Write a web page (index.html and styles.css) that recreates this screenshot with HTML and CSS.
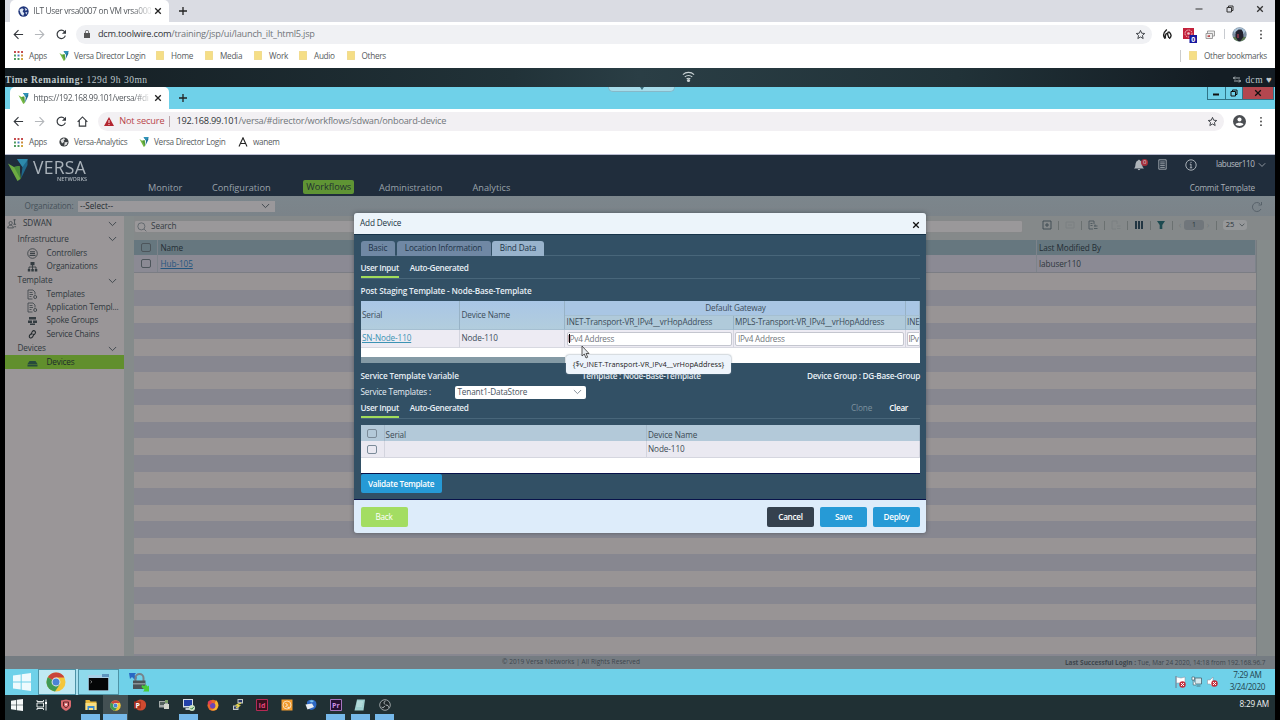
FILE: index.html
```html
<!DOCTYPE html>
<html lang="en">
<head>
<meta charset="utf-8">
<title>Versa Director</title>
<link rel="stylesheet" href="styles.css">
</head>
<body>
<svg class="defs" aria-hidden="true">
  <defs>
    <symbol id="back" viewBox="0 0 12 12"><path d="M11 6H1.500M6 1.300 1.300 6 6 10.700" fill="none" stroke="currentColor" stroke-width="1.200"/></symbol>
    <symbol id="fwd" viewBox="0 0 12 12"><path d="M1 6H10.500M6 1.300 10.700 6 6 10.700" fill="none" stroke="currentColor" stroke-width="1.200"/></symbol>
    <symbol id="reload" viewBox="0 0 12 12"><path d="M10.200 7.300A4.600 4.600 0 1 1 9.400 3" fill="none" stroke="currentColor" stroke-width="1.300"/><path d="M10.900.800v4.400H6.500z" fill="currentColor"/></symbol>
    <symbol id="home" viewBox="0 0 12 12"><path d="M.7 6.300 6 1l5.300 5.300M2.500 5v6h7V5" fill="none" stroke="currentColor" stroke-width="1.200"/></symbol>
    <symbol id="star" viewBox="0 0 12 12"><path d="m6 1.500 1.300 3.100 3.300.3-2.500 2.200.8 3.300L6 8.700l-2.900 1.700.8-3.300L1.400 4.900l3.300-.3z" fill="none" stroke="currentColor" stroke-width="1"/></symbol>
    <symbol id="dots" viewBox="0 0 4 12"><circle cx="2" cy="2" r="1"/><circle cx="2" cy="6" r="1"/><circle cx="2" cy="10" r="1"/></symbol>
    <symbol id="apps" viewBox="0 0 10.200 10.200"><path fill="#c4484a" d="M0 0h2.200v2.200H0zM4 0h2.200v2.200H4zM8 0h2.200v2.200H8z"/><path fill="#4c9a5d" d="M0 4h2.200v2.200H0z"/><path fill="#4a7fc0" d="M4 4h2.200v2.200H4z"/><path fill="#c98a3c" d="M8 4h2.200v2.200H8z"/><path fill="#4c9a5d" d="M0 8h2.200v2.200H0zM4 8h2.200v2.200H4z"/><path fill="#d0a43c" d="M8 8h2.200v2.200H8z"/></symbol>
    <symbol id="versa" viewBox="0 0 20 22"><path fill="#76b843" d="M0 4.500 6 8l5.500-1L12.500 20l-3 2z"/><path fill="#4f9a3a" d="m6 8 5.500-1L12.500 20z"/><path fill="#1f6f94" d="M9 0h10.500v6L13 19.500 14.500 8z"/><path fill="#2f93b8" d="M9 0h10.500v1L14.500 8z"/></symbol>
    <symbol id="x" viewBox="0 0 8 8"><path d="m1.200 1.200 5.600 5.600m0-5.600L1.200 6.800" fill="none" stroke="currentColor" stroke-width="1.300"/></symbol>
    <symbol id="plus" viewBox="0 0 8 8"><path d="M4 0v8M0 4h8" fill="none" stroke="currentColor" stroke-width="1.300"/></symbol>
    <symbol id="chev" viewBox="0 0 10 6"><path d="m1 .8 4 4 4-4" fill="none" stroke="currentColor" stroke-width="1"/></symbol>
    <symbol id="restore" viewBox="0 0 8 8"><path d="M1 2.500h4.500V7H1zM2.500 2.500V1H7v4.500H5.500" fill="none" stroke="currentColor" stroke-width="1"/></symbol>
    <symbol id="folder" viewBox="0 0 8 9"><path fill="#f5de86" stroke="#e6ca68" stroke-width=".5" d="M.3.3h7.400v8.400H.3z"/></symbol>
    <symbol id="globe" viewBox="0 0 10 10"><circle cx="5" cy="5" r="4.600" fill="#3c4043"/><path fill="#fff" d="M1.500 3.300 5 1l1 1.500-1.500 1.300.8 1L3 6.500zM5.500 5.200 8.800 5 7.500 8 5 8.800l.6-1.800z" opacity=".85"/></symbol>
    <symbol id="tpl" viewBox="0 0 11 11"><path d="M5.500 10H1V1h5l2 2v2.500M2.500 3.500h3M2.500 5.500h3.500M2.500 7.500h2" fill="none" stroke="currentColor" stroke-width=".8"/><circle cx="8.200" cy="8" r="1.500" fill="none" stroke="currentColor" stroke-width=".9"/></symbol>
    <symbol id="chrome" viewBox="0 0 20 20"><circle cx="10" cy="10" r="9.500" fill="#f3c63b"/><path fill="#c9453c" d="M10 10 1.800 5.200A9.500 9.500 0 0 1 18.400 5.500H10z"/><path fill="#3f9a55" d="M1.800 5.200A9.500 9.500 0 0 0 9 19.500L13.900 12.300 10 10z"/><circle cx="10" cy="10" r="4.400" fill="#eef3ee"/><circle cx="10" cy="10" r="3.500" fill="#4a83d6"/></symbol>
    <symbol id="win" viewBox="0 0 18 18"><path fill="currentColor" d="M0 2.500 7.700 1.400v7.100H0zM8.700 1.200 18 0v8.500H8.700zM0 9.500h7.700v7.100L0 15.500zM8.700 9.500H18V18l-9.300-1.200z"/></symbol>
  </defs>
</svg>

<div class="screen">
  <!-- outer browser -->
  <div class="tabstrip outer">
    <div class="tab">
      <svg class="fav" viewBox="0 0 10 10"><circle cx="5" cy="5" r="4.700" fill="#1f357a"/><path fill="#dfe8f5" d="M1.200 3.500 3.700 2l1.500 1-1 2 1.500 1.500-1 2.500-2-1.500zM6 1.500l2.500 1.700L7 4.500zM6.500 6l2-.5-.8 2.300z"/></svg>
      <span class="tabtitle ls-a">ILT User vrsa0007 on VM vrsa000</span>
      <svg class="x7"><use href="#x"/></svg>
    </div>
    <svg class="newtab"><use href="#plus"/></svg>
    <div class="winbtns"><svg viewBox="0 0 8 8"><path d="M0.500 4h7" stroke="#333"/></svg><svg><use href="#restore"/></svg><svg><use href="#x"/></svg></div>
  </div>
  <div class="addr a1">
    <svg class="ic"><use href="#back"/></svg><svg class="ic faint"><use href="#fwd"/></svg><svg class="ic"><use href="#reload"/></svg>
    <div class="pill">
      <svg class="lock" viewBox="0 0 6 8"><path fill="#555" d="M0 3h6v5H0z"/><path d="M1.400 3V1.800a1.600 1.600 0 0 1 3.200 0V3" fill="none" stroke="#555" stroke-width=".8"/></svg>
      <span class="url u1"><b>dcm.toolwire.com</b>/training/jsp/ui/launch_ilt_html5.jsp</span>
      <svg class="star"><use href="#star"/></svg>
    </div>
    <div class="ext">
      <svg class="e1" viewBox="0 0 10 10"><path d="M4.800.5C1.500 3.500.3 6.500 3.200 9.700M3.600 9.500C2.500 6.500 4 5.500 4.700 4M6.500 2.500C9.800 5 9.800 7.500 7.200 9.700M6.300 3C4.500 5.500 6.500 6.500 6.800 9" fill="none" stroke="#222" stroke-width="1.400"/></svg>
      <svg class="e2" viewBox="0 0 14 15"><path fill="#c3213b" d="M0 0h11v11H0z"/><circle cx="5.500" cy="5.500" r="3.500" fill="none" stroke="#f1c9cf" stroke-dasharray="1.500 .8"/><circle cx="5.500" cy="5.500" r="1.300" fill="#f1c9cf"/><path fill="#17179e" d="M6.500 7H14v8H6.500z"/><text x="8.300" y="13.700" fill="#fff" font-size="7" font-weight="700" font-family="Open Sans">0</text></svg>
      <svg class="e3" viewBox="0 0 10 9"><path d="M1 3.500h6.500v5H1zM2.500 3.500v-2.500h7V6H7.500" fill="#eee" stroke="#888" stroke-width=".8"/><path fill="#b55" d="M2.500 5.500 5 5v2H2.500z"/></svg>
      <i class="sep"></i>
      <svg class="e4" viewBox="0 0 15 15"><circle cx="7.500" cy="7.500" r="7.200" fill="#7b8da0"/><path fill="#a9c1d6" d="M1.500 4a7.200 7.200 0 0 1 12 0l-2 3H3z"/><path fill="#5d7a52" d="M1 10h13a7 7 0 0 1-13 0z"/><path fill="#23232f" d="M3.500 5l3-2.500h3L11 5l.5 5-3 4H6L3.500 10z"/><path fill="#773244" d="M5 7h2v4H5z"/></svg>
      <svg class="e5"><use href="#dots"/></svg>
    </div>
  </div>
  <div class="bookmarks b1">
    <span class="bm"><svg class="i9"><use href="#apps"/></svg>Apps</span>
    <span class="bm"><svg class="i10"><use href="#versa"/></svg>Versa Director Login</span>
    <span class="bm"><svg class="i8"><use href="#folder"/></svg>Home</span>
    <span class="bm"><svg class="i8"><use href="#folder"/></svg>Media</span>
    <span class="bm"><svg class="i8"><use href="#folder"/></svg>Work</span>
    <span class="bm"><svg class="i8"><use href="#folder"/></svg>Audio</span>
    <span class="bm"><svg class="i8"><use href="#folder"/></svg>Others</span>
    <span class="bm other"><svg class="i8"><use href="#folder"/></svg>Other bookmarks</span>
  </div>

  <!-- remote session bar -->
  <div class="session">
    <span class="remain"><b>Time Remaining:</b> 129d 9h 30mn</span>
    <svg class="wifi" viewBox="0 0 14 13"><path d="M1 4.500a8.500 8.500 0 0 1 12 0M3 7a5.700 5.700 0 0 1 8 0M5 9.200a2.800 2.800 0 0 1 4 0" fill="none" stroke="#c9d2d4" stroke-width="1.200"/><circle cx="7" cy="10.800" r="1.700" fill="#c9d2d4"/></svg>
    <span class="dcm"><svg viewBox="0 0 8 7"><path d="M0 2h7M2 .5.5 2 2 3.500M1 5h7M6 3.500 7.500 5 6 6.500" fill="none" stroke="#c4cdd0" stroke-width=".8"/></svg>dcm ♥</span>
  </div>

  <!-- inner browser -->
  <div class="tabstrip inner">
    <div class="tab">
      <svg class="fav"><use href="#versa"/></svg>
      <span class="tabtitle ls-b">https://192.168.99.101/versa/#di</span>
      <svg class="x7"><use href="#x"/></svg>
    </div>
    <svg class="newtab"><use href="#plus"/></svg>
    <div class="handle"><svg viewBox="0 0 4 3"><path d="M0 0h4L2 3z" fill="#3b6c7b"/></svg></div>
    <div class="rdp"><span><svg viewBox="0 0 8 8"><path d="M1 5.500h6" stroke="#111" stroke-width="2"/></svg></span><span><svg class="bold"><use href="#restore"/></svg></span><span class="red"><svg class="bold"><use href="#x"/></svg></span></div>
  </div>
  <div class="addr a2">
    <svg class="ic"><use href="#back"/></svg><svg class="ic faint"><use href="#fwd"/></svg><svg class="ic"><use href="#reload"/></svg><svg class="ic"><use href="#home"/></svg>
    <div class="pill">
      <svg class="warn" viewBox="0 0 10 9"><path fill="#b32530" d="M5 0 10 9H0z"/><path d="M5 3v3M5 7v1" stroke="#fff" stroke-width=".9"/></svg>
      <span class="notsec">Not secure</span><i class="sep2"></i>
      <span class="url u2"><b>192.168.99.101</b>/versa/#director/workflows/sdwan/onboard-device</span>
      <svg class="star"><use href="#star"/></svg>
    </div>
    <svg class="user" viewBox="0 0 12 12"><circle cx="6" cy="6" r="6" fill="#4b4e52"/><circle cx="6" cy="4.200" r="1.900" fill="#fff"/><path fill="#fff" d="M2.300 8.500C3.500 6.600 8.500 6.600 9.700 8.500 8.500 10.600 3.500 10.600 2.300 8.500z"/></svg>
    <svg class="e5"><use href="#dots"/></svg>
  </div>
  <div class="bookmarks b2">
    <span class="bm"><svg class="i9"><use href="#apps"/></svg>Apps</span>
    <span class="bm"><svg class="i10"><use href="#globe"/></svg>Versa-Analytics</span>
    <span class="bm"><svg class="i10"><use href="#versa"/></svg>Versa Director Login</span>
    <span class="bm"><svg class="i10" viewBox="0 0 10 10"><path d="M1 9.500 5 .8l4 8.700M3 6.500h4.500" fill="none" stroke="#222" stroke-width="1.100"/></svg>wanem</span>
  </div>

  <!-- application -->
  <header class="apphead">
    <div class="brand">
      <svg class="logo"><use href="#versa"/></svg>
      <div class="word"><strong>VERSA</strong><small>NETWORKS</small></div>
    </div>
    <nav>
      <span>Monitor</span><span>Configuration</span><span class="on">Workflows</span><span>Administration</span><span>Analytics</span>
    </nav>
    <div class="account">
      <div class="acc1">
        <span class="bell"><svg viewBox="0 0 12 12"><path fill="#aeb4ba" d="M1 9.500C3 8 2 5 3 3.500 3.500 2 4.500 1.800 5 1.500 5 .5 7 .5 7 1.500 9 2 9.200 4 9.300 6c0 1.500.7 2.500 1.700 3.500zM4.800 10h2.400c0 1.500-2.400 1.500-2.400 0z"/></svg><em>0</em></span>
        <svg class="list" viewBox="0 0 9 11"><path d="M.8.800h7.400v9.400H.8zM2.200 3h4.600M2.200 4.800h4.600M2.200 6.600h4.600M2.200 8.400h4.600" fill="none" stroke="#a5abb2" stroke-width=".9"/></svg>
        <svg class="info" viewBox="0 0 12 12"><circle cx="6" cy="6" r="5.200" fill="none" stroke="#b6bcc2" stroke-width=".9"/><path d="M6 5v3.800M4.800 5.200H6M4.800 8.800h2.400M6 2.800V4" fill="none" stroke="#b6bcc2" stroke-width=".9"/></svg>
        <span class="who">labuser110</span><svg class="chv"><use href="#chev"/></svg>
      </div>
      <span class="commit">Commit Template</span>
    </div>
  </header>
  <div class="orgbar">
    <span class="orglabel">Organization:</span>
    <div class="orgsel"><span>--Select--</span><svg class="chv"><use href="#chev"/></svg></div>
    <svg class="refresh" viewBox="0 0 12 12"><path d="M10 8A4.500 4.500 0 1 1 9 2.700M10.500 1v3H7.500" fill="none" stroke="#545d66" stroke-width=".9"/></svg>
  </div>
  <div class="main">
    <aside>
      <div class="grp r15 top"><svg viewBox="0 0 11 11"><circle cx="4" cy="4.500" r="1.800" fill="none" stroke="#3f474c" stroke-width=".8"/><path d="M.8 9.800c.2-4 6-4 6.200 0zM7 1l2.500-.2M8.300.8v5M7 5.800h3M8 8.500h2" fill="none" stroke="#3f474c" stroke-width=".9"/></svg><span>SDWAN</span><svg class="chv"><use href="#chev"/></svg></div>
      <div class="grp r16"><span>Infrastructure</span><svg class="chv"><use href="#chev"/></svg></div>
      <div class="leaf r12"><svg viewBox="0 0 11 11"><circle cx="5.500" cy="5.500" r="4.800" fill="none" stroke="#333b40" stroke-width=".8"/><path d="M3 3.800h5M3 5.600h5M2.500 7.400h6" stroke="#333b40" stroke-width="1"/></svg><span>Controllers</span></div>
      <div class="leaf r14"><svg viewBox="0 0 11 11"><path fill="#333b40" d="M3.500 1h4v3.200h-4zM.8 8h2.500v2.500H.8zM4.300 8h2.500v2.500H4.300zM7.800 8h2.500v2.500H7.800z"/><path d="M2 8V6h7v2M5.500 4v4" fill="none" stroke="#333b40" stroke-width=".9"/></svg><span>Organizations</span></div>
      <div class="grp r15"><span>Template</span><svg class="chv"><use href="#chev"/></svg></div>
      <div class="leaf r12"><svg><use href="#tpl"/></svg><span>Templates</span></div>
      <div class="leaf r14"><svg><use href="#tpl"/></svg><span>Application Templ...</span></div>
      <div class="leaf r13"><svg viewBox="0 0 11 11"><path fill="#333b40" d="M2 2h7v2.500H2zM1 5.500h4V8H1zM6 5.500h4V8H6zM3 8.500h5v1.500H3z"/></svg><span>Spoke Groups</span></div>
      <div class="leaf r15"><svg viewBox="0 0 11 11"><path d="M5 5.500C3.500 4 6 .8 7.800 2s-.3 4.300-1.800 4M6 5c1.500 1.500-1.500 5-3.200 3.600S4 4 5.500 5" fill="none" stroke="#23292d" stroke-width="1.100"/></svg><span>Service Chains</span></div>
      <div class="grp r13"><span>Devices</span><svg class="chv"><use href="#chev"/></svg></div>
      <div class="leaf r14 sel"><svg viewBox="0 0 11 11"><path fill="#274a3c" d="M2.500 4h6l2 3H.5zM.5 7.500h10v2H.5z"/></svg><span>Devices</span></div>
    </aside>
    <section class="content">
      <div class="toolbar">
        <div class="search"><svg viewBox="0 0 11 11"><circle cx="4.800" cy="4.800" r="3.900" fill="none" stroke="#525a60" stroke-width=".8"/><path d="m7.800 7.800 2.500 2.500" stroke="#525a60" stroke-width=".8"/></svg>Search</div>
        <div class="tools">
          <svg viewBox="0 0 10 10"><path d="M1 1h8v8H1zM5 3v4M3 5h4" fill="none" stroke="#3c4a50" stroke-width=".9"/></svg><i></i>
          <svg viewBox="0 0 10 10" class="dim"><path d="M1 2h8v6H1zM3 5h4" fill="none" stroke="#60686c" stroke-width=".8"/></svg><i></i>
          <svg viewBox="0 0 10 10"><path d="M5 9H1V1h5v3M2.500 3.500h2M2.500 5.500h2M6 6h3.500M6 8.500h3.500M7 4.500v2" fill="none" stroke="#4c585e" stroke-width=".9"/></svg><i></i>
          <svg viewBox="0 0 10 10" class="dim"><path d="M5 9H1V1h5v3M6 6h3.500M6 8.500h3.500" fill="none" stroke="#60686c" stroke-width=".8"/></svg><i></i>
          <svg viewBox="0 0 10 10"><path d="M2 1v8M5 1v8M8 1v8" stroke="#1e333f" stroke-width="1.900"/></svg><i></i>
          <svg class="funnel" viewBox="0 0 10 10"><path fill="#1d4a50" d="M1 1h8L6.300 5v4H3.700V5z"/></svg><i></i>
          <span class="pager"><u>‹</u><b>1</b><u>›</u></span><i></i>
          <span class="size">25<svg><use href="#chev"/></svg></span>
        </div>
      </div>
      <div class="grid">
        <div class="ghead"><span class="ck"><i></i></span><span>Name</span><span>Last Modified By</span></div>
        <div class="grow"><span class="ck"><i></i></span><span><a>Hub-105</a></span><span>labuser110</span></div>
        <div class="stripes"></div>
      </div>
    </section>
  </div>
  <footer><span></span><span class="copy">© 2019 Versa Networks | All Rights Reserved</span><span class="login"><b>Last Successful Login :</b> Tue, Mar 24 2020, 14:18 from 192.168.96.7</span></footer>

  <!-- remote taskbar -->
  <div class="rtask">
    <div class="rt s"><svg><use href="#win"/></svg></div>
    <div class="rt c"><svg><use href="#chrome"/></svg></div>
    <div class="rt t"><svg viewBox="0 0 21 17"><path fill="#a8cfe6" d="M0 1h21v16H0z"/><path fill="#5d94bd" d="M14 0h7v3h-7z"/><path fill="#050607" d="M.8 4h19.400v12.300H.8z"/><path d="m2.500 6.500 1.500 1.300L2.500 9" fill="none" stroke="#aaa" stroke-width=".7"/></svg></div>
    <div class="rt l"><svg viewBox="0 0 20 20"><path fill="#2868c4" d="M0 1h7L5.500 3 8 6 6 8 3 5 1 7z"/><path d="M6.500 9V6a4 4 0 0 1 8 0v3" fill="none" stroke="#77828a" stroke-width="2"/><path fill="#4b5359" d="M4 8.500h12.500V17H4z"/><path fill="#8b9499" d="M4 11h12.500v1.500H4z"/><path fill="#49cc3a" d="m13 13 2 1 2-1.500 1.500 2 1.500-1v6h-6l1.500-1.800-3-2.700z"/></svg></div>
    <div class="tray">
      <svg viewBox="0 0 11 12"><path d="M1 0v12" stroke="#778"/><path fill="#fff" stroke="#889" stroke-width=".5" d="M1.500 1 6 2l4-1v6H1.500z"/><circle cx="7.500" cy="8.500" r="3.200" fill="#c22e3d"/><path d="m6 7 3 3m0-3-3 3" stroke="#fff"/></svg>
      <svg viewBox="0 0 11 12"><path fill="#d5e9ef" stroke="#47636f" stroke-width=".8" d="M4 2h6.500v6H4zM5.500 10h4"/><path fill="#fff" stroke="#47636f" stroke-width=".7" d="M1 1h2.500v3H1zM2.200 4v5H5"/></svg>
      <svg viewBox="0 0 11 12"><path fill="#fff" stroke="#889" stroke-width=".5" d="M.5 4H3l3-3v10L3 8H.5z"/><circle cx="7.500" cy="7.500" r="3.200" fill="#c22e3d"/><path d="m6 6 3 3m0-3-3 3" stroke="#fff"/></svg>
      <div class="clock"><span>7:29 AM</span><span>3/24/2020</span></div>
    </div>
  </div>

  <!-- host taskbar -->
  <div class="htask">
    <div><svg class="w"><use href="#win"/></svg></div>
    <div><svg viewBox="0 0 12 12"><path d="M1 1v1.500h6.500V1M1 11V9.500h6.500V11M1 4h6.500v4H1zM10 .5v11" fill="none" stroke="#e4e8e8" stroke-width="1"/><path fill="#fff" d="M9 3h2v2H9z"/></svg></div>
    <div><svg viewBox="0 0 12 12"><path fill="#d96a6e" d="M1 1.500 6 .5l5 1v5C11 9.500 8 11 6 12 4 11 1 9.500 1 6.500z"/><path d="M3.500 3h5v4L6 9 3.500 7z" fill="none" stroke="#63262b"/><circle cx="6" cy="5.500" r="1" fill="#fff"/></svg></div>
    <div class="run f"><svg viewBox="0 0 12 12"><path fill="#e9b93d" d="M.5 1h4l1 1.500h6V11H.5z"/><path fill="#f9df83" d="M.5 4h11v7H.5z"/><path fill="#3d8bd0" d="M2.500 7h7v4H8V9H4v2H2.500z"/></svg></div>
    <div class="run on"><svg class="ch"><use href="#chrome"/></svg></div>
    <div><svg viewBox="0 0 12 12"><circle cx="6.500" cy="6" r="5.600" fill="#cf4a30"/><path fill="#a83320" d="M0 2.500h7v7H0z"/><text x="1.600" y="8.600" fill="#fff" font-size="7" font-weight="700" font-family="Open Sans">P</text></svg></div>
    <div><svg viewBox="0 0 12 12"><path fill="#a4aaa9" d="M1 2h9v6.500H1z"/><path fill="#52605c" d="M2 3h5v3H2z"/><path fill="#d2d6cc" d="M6 5h5v5H6z"/><path fill="#7a9f68" d="M7 1h3v3H7z"/></svg></div>
    <div class="run m"><svg viewBox="0 0 12 12"><path fill="#d6dde6" d="M0 0h10v8.500H0z"/><path fill="#2340a8" d="M1 1h8v6H1z"/><path fill="#c3ccd4" d="M2.500 9h5v2h-5z"/><circle cx="9" cy="9" r="3" fill="#cfe5c6"/><path d="m7.500 9 1.200 1.200L10.700 8" fill="none" stroke="#2e7d3c"/></svg></div>
    <div><svg viewBox="0 0 12 12"><circle cx="6" cy="6.300" r="5.500" fill="#e8662b"/><path fill="#f7b731" d="M9 1c2 2 3 5 1.500 8S5 12 3 10.500C8 11 9 8 7.500 5.500z"/><circle cx="5.700" cy="6.700" r="2.700" fill="#6a45b8"/><path fill="#e23d58" d="M.7 4C1 2 3 1 4 1.500L5 4 2.500 6z"/></svg></div>
    <div><svg viewBox="0 0 12 12"><path fill="#c4c9c6" d="M5.500 0h5.500v4.500H5.500zM1 6.500h5.500V11H1z"/><path fill="#28366a" d="M6.500 1H10v2.300H6.500zM2 7.500h3.500v2.300H2z"/><path d="M9 4 4.500 6l3 .7L4 9" fill="none" stroke="#ecd84b" stroke-width="1.200"/></svg></div>
    <div><svg viewBox="0 0 12 12"><path fill="#39101c" stroke="#b62a55" d="M.5.500h11v11H.5z"/><text x="2.600" y="8.700" fill="#e0447a" font-size="7" font-weight="700" font-family="Open Sans">Id</text></svg></div>
    <div><svg viewBox="0 0 12 12"><path fill="#f19a2c" d="M.5.500h11v11H.5z"/><circle cx="6" cy="6" r="4" fill="none" stroke="#fbe2bd" stroke-width=".9"/><path d="m4.500 4 2 2-2 2M6.500 8.300h2" fill="none" stroke="#fff" stroke-width=".9"/></svg></div>
    <div><svg viewBox="0 0 12 12"><path fill="#2d68c4" d="M2 3c1-2.500 7-3.500 9 0 1.500 4-1 8-5 8L2 9z"/><path fill="#e9edf3" d="M.5 5.500 7 4.500 9 8l-6.500 2.500z"/><path fill="#7cc4f1" d="M4 2c1.500-1 4-1 5 0L7 3.500z"/></svg></div>
    <div class="run p"><svg viewBox="0 0 12 12"><path fill="#251033" stroke="#a775bf" d="M.5.500h11v11H.5z"/><text x="2" y="8.700" fill="#c992e6" font-size="7" font-weight="700" font-family="Open Sans">Pr</text></svg></div>
    <div class="run p"><svg viewBox="0 0 12 12"><path fill="#9fd0d0" d="M3 .5h8L9.500 11.500H.5z"/><path d="M3 3h6M3 5h5.500M2.500 7h5.500" stroke="#d9efee" stroke-width=".7"/></svg></div>
    <div class="run p"><svg viewBox="0 0 12 12"><circle cx="6" cy="6" r="5.300" fill="#20272a" stroke="#b9bec0" stroke-width=".8"/><path d="M6 5.500C4.500 4 5 2.500 6.500 2M6.700 6.200c2-.5 3 .8 2.800 2.300M5.500 7C5 9 3.500 9 2.500 8" fill="none" stroke="#b9bec0" stroke-width="1"/></svg></div>
    <span class="hclock">8:29 AM</span>
  </div>
</div>

<!-- Add Device dialog -->
<div class="modal">
  <div class="mhead"><span>Add Device</span><svg class="x8"><use href="#x"/></svg></div>
  <div class="mbody">
    <div class="mtabs"><span>Basic</span><span>Location Information</span><span class="act">Bind Data</span></div>
    <div class="subtabs st1"><span class="cur">User Input</span><span>Auto-Generated</span></div>
    <div class="mtitle">Post Staging Template - Node-Base-Template</div>
    <div class="vars">
      <div class="vh tall">Serial</div><div class="vh tall">Device Name</div><div class="vh dg">Default Gateway</div><div class="vh dg2"></div>
      <div class="vh">INET-Transport-VR_IPv4__vrHopAddress</div><div class="vh">MPLS-Transport-VR_IPv4__vrHopAddress</div><div class="vh">INE</div>
      <div class="vd"><a>SN-Node-110</a></div><div class="vd">Node-110</div><div class="vd in"><span class="focus">IPv4 Address</span></div><div class="vd in"><span>IPv4 Address</span></div><div class="vd in last"><span>IPv</span></div>
      <div class="hscroll"></div>
    </div>
    <div class="info1"><b>Service Template Variable</b><span>Template : Node-Base-Template</span><span class="r">Device Group : DG-Base-Group</span></div>
    <div class="info2"><span>Service Templates :</span><div class="sel2">Tenant1-DataStore<svg class="chv"><use href="#chev"/></svg></div></div>
    <div class="subtabs st2"><span class="cur">User Input</span><span>Auto-Generated</span><span class="clone">Clone</span><span class="clear">Clear</span></div>
    <div class="svc">
      <div class="sh"><span class="ck"><i></i></span><span>Serial</span><span>Device Name</span></div>
      <div class="sr"><span class="ck"><i></i></span><span></span><span>Node-110</span></div>
    </div>
    <button class="validate">Validate Template</button>
  </div>
  <div class="mfoot"><button class="green">Back</button><button class="dark">Cancel</button><button>Save</button><button>Deploy</button></div>
</div>
<div class="tip">{$v_INET-Transport-VR_IPv4__vrHopAddress}</div>
<svg class="cursor" viewBox="0 0 9 14"><path fill="#e8ecf0" stroke="#333" stroke-width=".8" d="M1 1v10l2.300-2L5 13l1.700-.8L5 8.500h3z"/></svg>
</body>
</html>
```
FILE: styles.css
```css
* { box-sizing: border-box; }
body { margin: 0; width: 1280px; height: 720px; overflow: hidden; background: #000; font: 8.200px/1 "Open Sans", "Noto Sans", sans-serif; color: #2d373d; }
svg { display: block; flex: none; }
.defs { position: absolute; width: 0; height: 0; }
.screen { width: 1270px; height: 720px; margin-left: 5px; overflow: hidden; white-space: nowrap; }
i { font-style: normal; }
button { border: 0; font: inherit; letter-spacing: inherit; }

/* browser chrome */
.tabstrip { display: flex; height: 22px; }
.outer { background: #dadce3; }
.inner { background: #6fd1e9; }
.tab { display: flex; align-items: center; width: 159px; margin-left: 5px; padding-left: 7.500px; background: #fff; border-radius: 5px 5px 0 0; }
.fav { width: 11px; height: 11px; margin-right: 5px; }
.tabtitle { width: 117px; overflow: hidden; font-size: 8.300px; line-height: 12px; color: #54585d; -webkit-mask-image: linear-gradient(90deg, #000 84%, rgba(0, 0, 0, .2) 98%); mask-image: linear-gradient(90deg, #000 84%, rgba(0, 0, 0, .2) 98%); }
.ls-a { letter-spacing: -.32px; }
.ls-b { letter-spacing: -.36px; }
.x7 { width: 8px; height: 8px; margin-left: 3px; color: #222; }
.newtab { width: 8px; height: 8px; margin: 7px 0 0 10px; color: #222; }
.winbtns { display: flex; gap: 22.500px; margin: 5px 11px 0 auto; color: #333; }
.winbtns svg { width: 8px; height: 8px; }
.handle { width: 67px; height: 5px; margin-left: 421px; background: #a6dcea; border: 1px solid #86b8c8; border-top: 0; border-radius: 0 0 5px 5px; }
.handle svg { width: 4px; height: 3px; margin: 0 auto; }
.rdp { display: flex; margin-left: auto; height: 13px; margin-right: 1px; border: 1px solid #2f7487; border-top: 0; }
.rdp span { display: flex; align-items: center; justify-content: center; width: 17.500px; border-right: 1px solid #2f7487; color: #111; }
.rdp svg { width: 8px; height: 8px; }
.rdp .red { width: 30px; background: #b3474f; border: 0; }
.bold { stroke: currentColor; stroke-width: .5; }
.addr { display: flex; align-items: center; height: 24px; padding-left: 8px; background: #fff; color: #34383d; }
.ic { width: 11px; height: 11px; margin-right: 10.300px; }
.faint { color: #b4b7bb; }
.pill { display: flex; align-items: center; height: 19px; padding-right: 6px; border-radius: 10px; background: #f0f1f4; }
.a1 .pill { width: 1076px; margin-left: -1px; margin-right: 10px; padding-left: 8px; }
.lock { width: 6px; height: 8px; margin-right: 8px; }
.url { font-size: 9.200px; line-height: 14px; color: #70757a; }
.url b { font-weight: 400; color: #303438; }
.u1 { letter-spacing: -.21px; }
.star { width: 11px; height: 11px; margin-left: auto; }
.ext { display: flex; align-items: center; }
.e1 { width: 10px; height: 10px; margin-right: 11px; }
.e2 { width: 14px; height: 15px; margin: 3px 8px 0 0; }
.e3 { width: 10px; height: 9px; margin-right: 9px; }
.sep { width: 1px; height: 10px; margin-right: 7px; background: #c8cbd0; }
.e4 { width: 15px; height: 15px; margin-right: 12px; }
.e5 { width: 4px; height: 11px; fill: #444; }
.a2 .pill { width: 1126px; margin: 0 9px 0 0; padding-left: 6px; background: #f2f0f3; }
.a2 .user { margin-right: 13px; margin-left: 0; }
.a2 .star { margin-right: 0; }
.warn { width: 10px; height: 9px; margin-right: 5px; }
.notsec { font-size: 9.200px; line-height: 14px; color: #b8444a; letter-spacing: -.13px; }
.sep2 { width: 1px; height: 11px; margin: 0 6px 0 5px; background: #b9a6ab; }
.u2 { letter-spacing: -.22px; }
.user { width: 13px; height: 13px; }
.bookmarks { display: grid; align-items: center; height: 22px; padding-left: 9px; background: #fff; padding-bottom: 3px; }
.b2 { border-bottom: 1px solid #b9bcd0; }
.bm { display: flex; align-items: center; font-size: 8.200px; letter-spacing: -.29px; line-height: 12px; color: #575b60; }
.bm svg { margin-right: 5px; }
.bm .i8 { margin-right: 7px; }
.bm:first-child svg { margin-right: 6px; }
.i9 { width: 9px; height: 9px; } .i10 { width: 10px; height: 10px; } .i8 { width: 8px; height: 9px; }
.b1 { grid-template-columns: 45px 97px 49px 49px 45px 47.500px 1fr 95px; }
.b2 { grid-template-columns: 45px 80px 99px 1fr; }
.b1 .other { border-left: 1px solid #ccc; padding-left: 8px; }

/* session bar */
.session { display: grid; grid-template-columns: 1fr 14px 1fr; align-items: center; height: 19px; background: linear-gradient(90deg, #141d22, #213238 40%, #2a3e45 50%, #213238 75%, #141d24 95%); color: #bec7ca; font: 9.500px/12px "Liberation Serif", serif; padding-top: 4px; }
.remain { letter-spacing: .52px; }
.session .wifi { width: 13px; height: 13px; margin: -7px 0 0 48.500px; }
.dcm { display: flex; justify-content: flex-end; align-items: center; gap: 4px; padding-right: 3px; letter-spacing: .45px; }
.dcm svg { width: 8px; height: 7px; }

/* application header */
.apphead { display: flex; height: 41px; background: #202d3c; color: #9aa2aa; }
.brand { display: flex; width: 137px; padding: 4px 0 0 3px; opacity: .9; }
.logo { width: 20px; height: 22px; margin-right: 5px; }
.word { width: 54px; display: flex; flex-direction: column; color: #b9c1c8; }
.word strong { height: 17px; font: 500 17.500px/17px "Open Sans", sans-serif; letter-spacing: .3px; }
.word small { font: 600 5.500px/6px "Open Sans", sans-serif; align-self: flex-end; }
nav { display: grid; grid-template-columns: 64px 91px 76px 93.500px 50px; align-items: center; height: 14px; margin-top: 25px; padding-left: 6px; font-size: 9.200px; }
nav .on { justify-self: start; margin-left: 0; padding: 2px 3.200px 3px; background: #5f9434; border-radius: 2px; color: #1f3030; }
.account { margin-left: auto; width: 146px; padding: 2px 0 0 0; }
.acc1 { display: flex; align-items: center; height: 15px; font-size: 8.200px; letter-spacing: -.4px; color: #b6bcc2; }
.bell { position: relative; margin-left: 4px; }
.bell svg { width: 12px; height: 12px; }
.bell em { position: absolute; left: 8px; top: 0; width: 7px; height: 7px; border-radius: 4px; background: #a52f3c; color: #ddd; font: 6px/7px "Open Sans", sans-serif; text-align: center; }
.list { width: 9px; height: 11px; margin-left: 13px; }
.info { width: 12px; height: 12px; margin-left: 18px; }
.who { margin-left: 19px; }
.chv { width: 9px; height: 6px; color: #3a4248; }
.who + .chv { margin-left: 3px; width: 8px; }
.commit { display: block; text-align: right; padding: 11.500px 20px 0 0; font-size: 8.200px; letter-spacing: -.2px; color: #a9b0b6; }
.orgbar { display: flex; align-items: center; height: 20px; padding-left: 19.500px; background: linear-gradient(#7c868c, #7b8389); }
.orglabel { width: 53.500px; color: #46525a; letter-spacing: -.18px; }
.orgsel { display: flex; align-items: center; justify-content: space-between; width: 197px; height: 11px; padding: 0 5px 0 2px; background: #9a989b; color: #252c31; }
.apphead .chv { color: #aab0b6; }
.refresh { width: 12px; height: 12px; margin: 1px 12px 0 auto; }

/* main area */
.main { display: flex; height: 440px; background: #858b8b; }
aside { width: 119px; background: #9a9698; color: #30383e; letter-spacing: -.12px; }
.grp { display: flex; align-items: center; padding: 0 7px 0 12.500px; }
.grp .chv { margin-left: auto; }
.top { padding-left: 2px; }
.top > svg:first-child { width: 10px; height: 10px; margin-right: 6px; }
.leaf { display: flex; align-items: center; padding-left: 22px; letter-spacing: -.16px; }
.leaf svg { width: 11px; height: 11px; margin-right: 8.500px; color: #3b4347; }
.r12 { height: 12px; } .r13 { height: 13px; } .r14 { height: 14px; } .r15 { height: 15px; } .r16 { height: 16px; }
.sel { background: #618f2d; color: #1d2b2b; }
.content { flex: 1; padding-left: 10px; }
.toolbar { display: flex; height: 24px; background: #85898a; }
.search { display: flex; align-items: center; width: 889px; height: 13px; margin: 4px 0 0; padding-left: 2px; background: #9a989a; border: 1px solid #868889; color: #343c42; border-radius: 2px; letter-spacing: -.1px; }
.search svg { width: 10px; height: 10px; margin-right: 4px; }
.tools { display: flex; align-items: center; height: 18px; margin-left: 18.500px; gap: 6.100px; }
.tools > svg { width: 10px; height: 10px; }
.tools > i { width: 1px; height: 9px; background: #6b7171; }
.dim { opacity: .3; }
.pager { display: flex; align-items: center; gap: 2.500px; }
.pager u { text-decoration: none; width: 3px; color: #747b7e; }
.pager b { width: 20px; height: 10px; border-radius: 3px; background: #70767b; text-align: center; font: 7px/10px "Open Sans", sans-serif; }
.tools .funnel { margin: 0 -1px; }
.size { display: flex; align-items: center; gap: 5px; width: 24px; height: 10px; padding-left: 3px; border-radius: 3px; background: #96989a; font-size: 7.500px; }
.size svg { width: 6px; height: 4px; }
.grid { width: 1122.500px; border-right: 1px solid #777c80; }
.ghead, .grow { display: grid; grid-template-columns: 24px 878.500px 1fr; align-items: stretch; letter-spacing: -.06px; }
.ghead { height: 15px; background: #66777f; color: #242e35; }
.grow { height: 18px; background: #8b8a94; border-bottom: 1px solid #7b7d84; }
.ghead span, .grow span { display: flex; align-items: center; padding: 1px 0 0 2.500px; border-right: 1px solid #7d838a; }
.ck { justify-content: center; padding: 0 !important; }
.ck i { width: 10px; height: 9px; border: 1px solid #4d555b; border-radius: 2px; }
.grow a { color: #24567f; text-decoration: underline; }
.stripes { height: 383px; background: repeating-linear-gradient(#989495 0 16.500px, #878790 16.500px 33.100px); }
footer { display: grid; grid-template-columns: 497px 1fr auto; align-items: center; height: 13px; padding-right: 9.500px; background: #757c82; font-size: 6.500px; color: #3d464d; }
.copy { letter-spacing: .06px; }
.login { font-size: 6.450px; padding-top: 2px; }

/* taskbars */
.rtask { display: flex; height: 26px; background: #6fd1e9; }
.rt { display: flex; align-items: center; justify-content: center; }
.rt.s { width: 33px; } .rt.s svg { width: 18px; height: 18px; color: #eefafd; }
.rt.c { width: 38px; border: 1px solid #4d93a6; background: #c0e9f3; box-shadow: 2px 0 0 #a9e0ee; padding-right: 2px; } .rt.c svg { width: 20px; height: 20px; }
.rt.t { width: 41px; margin-left: 2px; border: 1px solid #4d93a6; background: #8fdaec; } .rt.t svg { width: 21px; height: 17px; }
.rt.l { width: 42px; } .rt.l svg { width: 20px; height: 20px; margin: -1px 2px 0 0; }
.tray { display: flex; align-items: center; gap: 5px; margin-left: auto; padding-right: 10px; }
.tray svg { width: 11px; height: 12px; }
.clock { display: grid; gap: 3px; text-align: center; font-size: 8.200px; letter-spacing: -.38px; color: #24444f; margin-left: 7px; margin-top: -2px; }
.htask { display: flex; height: 25px; background: #203034; }
.htask div { display: flex; justify-content: center; width: 24.500px; padding-top: 4px; }
.htask div svg { width: 12px; height: 12px; }
.htask .ch { width: 11px; height: 11px; margin-top: .5px; }
.htask .w { color: #f4f8f8; }
.htask .run { background: linear-gradient(#76b9ea, #76b9ea) center bottom / 19px 6.500px no-repeat; }
.htask .on { background: linear-gradient(#76b9ea, #76b9ea) center bottom / 24px 6.500px no-repeat, #435053; }
.hclock { margin: 5px 6px 0 auto; color: #eef2f2; font-size: 8.200px; letter-spacing: -.2px; }

/* dialog */
.modal { position: absolute; left: 354px; top: 213px; width: 572px; height: 320px; border-radius: 3px; overflow: hidden; box-shadow: 0 0 4px rgba(30, 40, 50, .5); white-space: nowrap; letter-spacing: -.13px; }
.mhead { display: flex; align-items: center; justify-content: space-between; height: 21px; padding: 0 6px; background: #ecf4fa; color: #203444; }
.x8 { width: 8px; height: 8px; margin-top: 2px; color: #111; stroke: #111; stroke-width: .4; }
.mbody { height: 266px; padding: 6px 6px 0 6.500px; background: #325065; border-top: 1px solid #173449; border-bottom: 1px solid #08124a; color: #e6eef4; }
.mtabs { display: flex; gap: 1.500px; height: 15px; border-bottom: 1px solid #48667a; }
.mtabs span { width: 34.500px; height: 15px; border-radius: 3px 3px 0 0; background: #7088a4; color: #203448; line-height: 14.500px; text-align: center; }
.mtabs span:nth-child(2) { width: 94px; }
.mtabs .act { width: 52px; background: #98b3cc; }
.subtabs { display: flex; gap: 11px; height: 23px; border-bottom: 1px solid #48667a; letter-spacing: -.34px; font-weight: 600; line-height: 24px; }
.subtabs .cur { border-bottom: 2px solid #a2dc5a; }
.mtitle { height: 22px; padding-top: 8px; letter-spacing: -.15px; font-weight: 600; }
.vars { display: grid; grid-template-columns: 99.500px 105px 168.500px 172px 14.500px; grid-template-rows: 14.500px 14.500px 18px 15px; height: 62px; overflow: hidden; background: #fff; color: #3c4d5b; }
.vh { display: flex; align-items: center; padding: .5px 0 0 1.500px; background: #b0cada; border-right: 1px solid #97b2c6; border-bottom: 1px solid #a5bfd1; letter-spacing: -.155px; }
.vh.tall { grid-row: 1 / 3; background: linear-gradient(#a9c6e6, #b2cddd); }
.vh.dg { grid-column: 3 / 5; justify-content: center; background: #a9c6e4; }
.vh.dg2 { background: #a9c6e4; }
.vd { display: flex; align-items: center; padding-left: 1.500px; background: #edebf3; border-right: 1px solid #d3d4de; border-bottom: 1px solid #d7d8e0; }
.vd a { color: #3c93b4; text-decoration: underline; }
.vd.in span { flex: 1; height: 14px; margin: 0 1px 0 0; padding-left: 2px; border: 1px solid #c4c6cf; border-radius: 2px; background: #fff; color: #70757b; line-height: 12px; letter-spacing: -.2px; }
.vd.last { padding-left: 1px; }
.vd.last span { padding-left: 1px; margin: 0; border-right: 0; border-radius: 2px 0 0 2px; letter-spacing: -.5px; }
.vd.in .focus { position: relative; padding-left: 0; }
.focus::before { content: ""; position: absolute; left: 1px; top: 1px; width: 1px; height: 9px; background: #000; }
.hscroll { grid-column: 1 / 3; align-self: end; height: 6px; background: #849aa5; }
.info1 { display: grid; grid-template-columns: 221.500px 1fr auto; height: 17px; padding-top: 9px; letter-spacing: -.16px; }
.info1 span { font-weight: 600; letter-spacing: -.26px; }
.info1 b { font-weight: 600; }
.info2 { display: flex; align-items: center; height: 24px; letter-spacing: -.15px; }
.info2 > span { width: 94px; }
.sel2 { display: flex; align-items: center; justify-content: space-between; width: 131px; height: 13px; padding: 0 4px 0 3px; border-radius: 2px; background: #fff; color: #47525c; }
.sel2 .chv { color: #7d8790; }
.st2 { height: 15px; line-height: 8px; }
.st2 .clone { margin-left: auto; color: #7e929f; font-weight: 400; letter-spacing: -.1px; }
.st2 .clear { margin: 0 12px 0 6px; color: #fff; }
.svc { height: 49px; margin-top: 6px; background: #fff; border-bottom: 1px solid #08124a; color: #3c4954; letter-spacing: -.1px; }
.sh, .sr { display: grid; grid-template-columns: 24px 262.500px 1fr; height: 16px; background: #b3c9d9; }
.sh span, .sr span { display: flex; align-items: center; padding-left: 1px; border-right: 1px solid #a5b8c9; }
.sr span { border-color: #d3d4de; }
.sh span { padding-top: 4px; }
.sr { height: 17px; background: #eae9f1; border-bottom: 1px solid #d5d6df; }
.svc .ck i { border-color: #7b8b99; }
.validate { display: block; width: 81px; height: 19px; padding: 1px 0 0; border-radius: 2px; background: #269ad6; color: #fff; font-weight: 600; letter-spacing: -.32px; }
.mfoot { display: flex; gap: 6px; height: 33px; padding: 7px 6px 0 6.500px; background: #ddecfa; }
.mfoot button { width: 47px; height: 20px; padding: 0; border-radius: 2px; background: #269ad6; color: #fff; font-weight: 600; letter-spacing: -.28px; }
.mfoot .green { margin-right: auto; background: #a3dd62; font-weight: 400; }
.mfoot .dark { background: #35414e; }
.tip { position: absolute; left: 566px; top: 355px; width: 165px; height: 19px; border-radius: 3px; background: #eef4fb; box-shadow: 0 0 2px #6d7f8e; color: #222; font-size: 7.300px; line-height: 19px; text-align: center; white-space: nowrap; }
.cursor { position: absolute; left: 581px; top: 345px; width: 9px; height: 14px; }
```
